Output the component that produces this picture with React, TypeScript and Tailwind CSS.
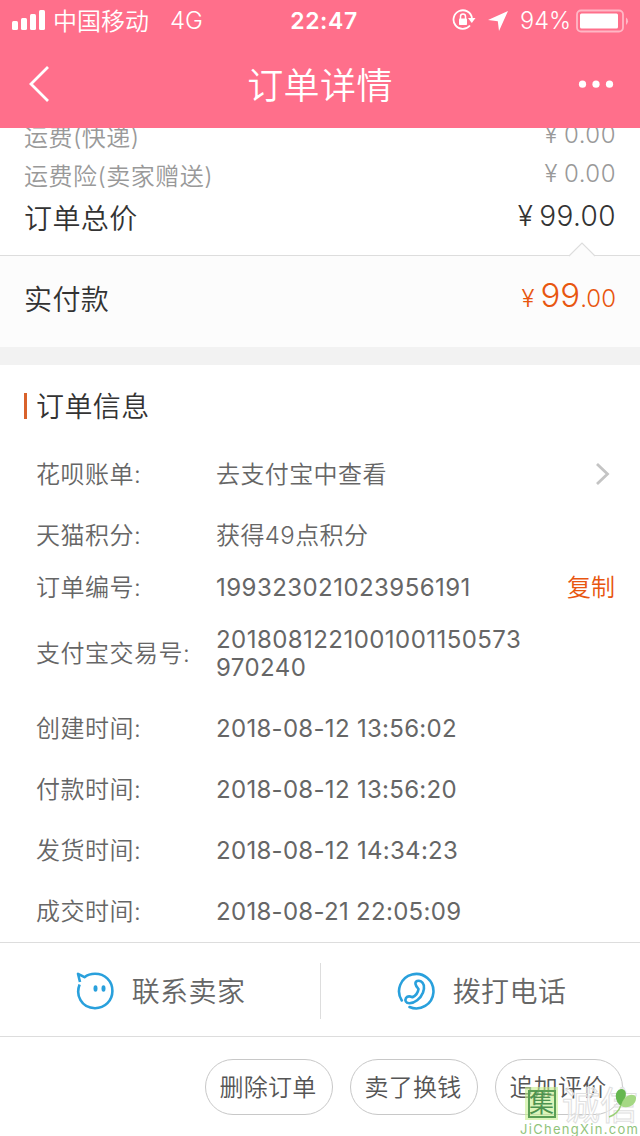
import { ReactNode } from "react";

type Info = { label: string; value: string; height: string; style?: string; extra?: ReactNode };

const rows: Info[] = [
  { label: "花呗账单:", value: "去支付宝中查看", height: "h-[61px]", extra: <ChevronIcon /> },
  { label: "天猫积分:", value: "获得49点积分", height: "h-[61px]" },
  { label: "订单编号:", value: "199323021023956191", height: "h-11", style: "tracking-[0.45px] font-[380]", extra: <button className="pr-px text-[#e8560f]">复制</button> },
  { label: "支付宝交易号:", value: "2018081221001001150573970240", height: "h-[88px]", style: "tracking-[0.45px] font-[380]" },
  { label: "创建时间:", value: "2018-08-12 13:56:02", height: "h-[61px]", style: "tracking-[0.3px] font-[380]" },
  { label: "付款时间:", value: "2018-08-12 13:56:20", height: "h-[61px]", style: "tracking-[0.3px] font-[380]" },
  { label: "发货时间:", value: "2018-08-12 14:34:23", height: "h-[61px]", style: "tracking-[0.3px] font-[380]" },
  { label: "成交时间:", value: "2018-08-21 22:05:09", height: "h-[61px]", style: "tracking-[0.3px] font-[380]" },
];

const actions = ["删除订单", "卖了换钱", "追加评价"];

export default function App() {
  return (
    <main className="relative flex h-[1136px] w-[640px] flex-col overflow-hidden bg-white font-['Inter','Noto_Sans_CJK_SC',sans-serif] font-[350] text-[#333]">
      <header className="h-32 shrink-0 bg-[#ff6f8b] text-white">
        <StatusBar />
        <div className="flex h-[88px] items-center justify-between pr-[26px] pl-[28px]">
          <svg width="22" height="38" viewBox="0 0 22 38" fill="none" stroke="currentColor" strokeWidth="2.8">
            <path d="M20 2 L3 19 L20 36" />
          </svg>
          <h1 className="pt-1 pl-3 text-4xl tracking-[0.4px]">订单详情</h1>
          <svg width="36" height="8" viewBox="0 0 36 8" fill="currentColor">
            <circle cx="4.5" cy="4.2" r="3.6" />
            <circle cx="18" cy="4.2" r="3.6" />
            <circle cx="31.5" cy="4.2" r="3.6" />
          </svg>
        </div>
      </header>

      <section className="flex h-[127px] shrink-0 flex-col overflow-hidden px-6">
        <div className="-mt-2.5 flex h-[39px] shrink-0 items-center justify-between text-2xl tracking-[0.5px] text-[#999]">
          <span>运费(快递)</span>
          <Price value="0.00" />
        </div>
        <div className="flex h-10 shrink-0 items-center justify-between text-2xl tracking-[0.5px] text-[#999]">
          <span>运费险(卖家赠送)</span>
          <Price value="0.00" />
        </div>
        <div className="flex h-[42px] shrink-0 items-center justify-between pt-px text-[28px] tracking-[0.4px]">
          <span>订单总价</span>
          <Price value="99.00" />
        </div>
      </section>

      <section className="relative flex h-[92px] shrink-0 items-center justify-between border-t border-[#ddd] bg-[#fcfcfc] px-6 pb-1">
        <svg className="absolute -top-[14px] right-11" width="28" height="15" viewBox="0 0 28 15">
          <path d="M1 14 L14 1 L27 14" fill="#fcfcfc" stroke="#ddd" strokeWidth="1.2" />
        </svg>
        <span className="text-[28px] tracking-[0.4px]">实付款</span>
        <span className="flex items-baseline pb-2.5 text-2xl text-[#e8560f]">
          <Yen />
          <span className="text-[33px]">99</span>.00
        </span>
      </section>
      <div className="h-[18px] shrink-0 bg-[#f2f2f2]" />

      <section className="h-[577px] shrink-0 pr-6 pl-9">
        <h2 className="-ml-3 flex h-[79px] items-center pt-1 text-[28px] tracking-[0.4px]">
          <span className="mr-[9px] mb-0.5 h-[26px] w-[3px] bg-[#d9622b]" />
          订单信息
        </h2>
        {rows.map((r) => (
          <div key={r.label} className={`flex items-center text-2xl text-[#666] ${r.height}`}>
            <span className="w-[180px] shrink-0 tracking-[0.5px]">{r.label}</span>
            <span className={`w-[310px] leading-7 break-all ${r.style ?? "tracking-[0.4px]"}`}>{r.value}</span>
            <span className="ml-auto">{r.extra}</span>
          </div>
        ))}
      </section>

      <section className="flex h-[95px] shrink-0 items-center border-y border-[#ddd] text-[28px] tracking-[0.4px] text-[#666]">
        <button className="mt-0.5 flex h-14 w-[321px] items-center justify-center gap-[18px] border-r border-[#ddd] pl-px">
          <ChatIcon />
          <span className="pt-0.5">联系卖家</span>
        </button>
        <button className="mt-0.5 flex h-14 w-[319px] items-center justify-center gap-[18px] pl-0.5">
          <PhoneIcon />
          <span className="pt-0.5">拨打电话</span>
        </button>
      </section>

      <footer className="flex grow items-center justify-end gap-[17px] pr-[17px]">
        {actions.map((a) => (
          <button key={a} className="h-14 w-32 rounded-full border border-[#c8c8c8] pt-0.5 pr-0.5 text-2xl tracking-[0.3px] text-[#555]">
            {a}
          </button>
        ))}
      </footer>
      <Watermark />
    </main>
  );
}

function StatusBar() {
  return (
    <div className="grid h-10 grid-cols-3 items-center pr-[10px] pl-3 pt-0.5 text-2xl">
      <div className="flex items-center">
        <svg className="mb-0.5" width="34" height="20" viewBox="0 0 34 20" fill="currentColor">
          <rect x="0" y="11" width="6" height="9" rx="1.5" />
          <rect x="9" y="8" width="6" height="12" rx="1.5" />
          <rect x="18" y="4" width="6" height="16" rx="1.5" />
          <rect x="27" y="0" width="6" height="20" rx="1.5" />
        </svg>
        <span className="ml-[7px] pt-0.5">中国移动</span>
        <span className="ml-[21px]">4G</span>
      </div>
      <span className="pl-1.5 text-center text-[23px] font-semibold tracking-[0.6px]">22:47</span>
      <div className="flex items-center justify-end">
        <svg className="mb-0.5" width="24" height="22" viewBox="0 0 24 22" fill="none" stroke="currentColor" strokeWidth="1.8">
          <path d="M18 16.5 A9.3 9.3 0 1 1 20 9" />
          <path d="M16 9 H23.5 L19.8 14 Z" fill="currentColor" stroke="none" />
          <rect x="7" y="9.5" width="8" height="6.5" rx="0.8" fill="currentColor" stroke="none" />
          <path d="M8.5 10 V7.5 A2.5 2.5 0 0 1 13.5 7.5 V10" strokeWidth="1.5" />
        </svg>
        <svg className="ml-3" width="20" height="20" viewBox="0 0 20 20" fill="currentColor">
          <path d="M20 0 L11 20 L9.8 10.2 L0 9 Z" />
        </svg>
        <span className="ml-3 text-[23.5px]">94%</span>
        <svg className="ml-[5px]" width="54" height="24" viewBox="0 0 54 24" fill="none">
          <rect x="1" y="1.5" width="46" height="21" rx="4" stroke="#fff" strokeOpacity="0.5" strokeWidth="1.8" />
          <rect x="4" y="4.5" width="38" height="15" rx="1.5" fill="#fff" />
          <path d="M50 8.5 A4.5 4.5 0 0 1 50 16 Z" fill="#fff" fillOpacity="0.5" />
        </svg>
      </div>
    </div>
  );
}

function Yen() {
  return <span className="mr-[6px]">¥</span>;
}

function Price({ value }: { value: string }) {
  return <span className="pb-1.5"><Yen />{value}</span>;
}

function ChevronIcon() {
  return (
    <svg className="mr-[6px] mb-0.5" width="15" height="24" viewBox="0 0 15 24" fill="none" stroke="#c4c4c4" strokeWidth="2.8">
      <path d="M2 2 L12.5 12 L2 22" />
    </svg>
  );
}

function ChatIcon() {
  return (
    <svg width="38" height="38" viewBox="0 0 38 38" fill="none" stroke="#29a0dc" strokeWidth="2.6" strokeLinejoin="round">
      <path d="M3.6 12.5 C-0.5 23 5 36 19 36.2 C29 36.2 36.4 28.5 36.4 19 C36.4 9 29 1.8 19 1.8 C14.5 1.8 11 3.2 8.5 5.2 L2 1.8 L4 10" />
      <ellipse cx="19.5" cy="16.5" rx="2" ry="3.2" fill="#29a0dc" stroke="none" />
      <ellipse cx="27.5" cy="16.5" rx="2" ry="3.2" fill="#29a0dc" stroke="none" />
    </svg>
  );
}

function PhoneIcon() {
  return (
    <svg width="38" height="38" viewBox="0 0 38 38" fill="none" stroke="#29a0dc" strokeWidth="2.6" strokeLinecap="round" strokeLinejoin="round">
      <path d="M4.8 28.5 A17.2 17.2 0 1 1 12.5 35" />
      <path d="M18.5 12 C18 9 21.5 8 24 9.4 C27.3 11.3 27.5 16 26 20.5 C23.5 27 17.5 31.3 12.5 31.3 C9 31.3 7.5 28.5 9 26 C10.5 23.8 13 24.2 15.5 25.2 C18.5 23.8 21 20.5 21.5 17 C20.3 15.5 18.8 14 18.5 12 Z" />
    </svg>
  );
}

function Watermark() {
  return (
    <div className="absolute right-0 bottom-0 h-[50px] w-[120px] font-normal">
      <span className="absolute top-[1px] left-[5px] flex size-[33px] items-center justify-center bg-[#c5ee8c]/60">
        <span className="flex size-7 items-center justify-center border-2 border-[#5b9f55] text-[25px] leading-none text-[#4e9350]">集</span>
      </span>
      <span className="absolute top-px left-[42px] text-[38px] leading-9 text-white/60 [-webkit-text-stroke:1px_#e0e0e0]">诚信</span>
      <svg className="absolute top-[1px] left-[86px]" width="32" height="34" viewBox="0 0 30 34">
        <path d="M14 19 C7 14 7 3 14 2 C20 2 21 9 14 19 Z" fill="#65b74f" />
        <path d="M14 19 C16 8 26 5 29 10 C30 17 21 23 14 19 Z" fill="#a5d884" />
        <path d="M14 18 Q11 27 2 30" fill="none" stroke="#9bd077" strokeWidth="1.5" />
      </svg>
      <span className="absolute bottom-[-1px] left-0 text-[13px] leading-4 tracking-[1.3px] text-[#91c47b]">JiChengXin.com</span>
    </div>
  );
}
